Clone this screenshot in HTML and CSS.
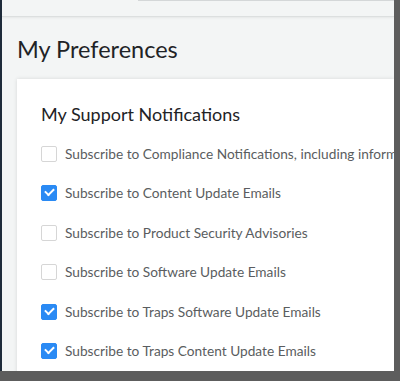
FILE: index.html
```html
<!DOCTYPE html>
<html lang="en">
<head>
  <meta charset="UTF-8" />
  <title>My Preferences</title>
  <meta name="viewport" content="width=device-width, initial-scale=1.0" />
  <link rel="stylesheet" href="styles.css">
</head>
<body>

<div class="screen">
  <header class="topbar">
    <div class="search"></div>
  </header>

  <h1>My Preferences</h1>

  <div class="card">
    <h2>My Support Notifications</h2>
    <div class="checklist">
      <label><input type="checkbox" /><span class="box"></span> Subscribe to Compliance Notifications, including information about product certifications</label>
      <label><input type="checkbox" checked /><span class="box"></span> Subscribe to Content Update Emails</label>
      <label><input type="checkbox" /><span class="box"></span> Subscribe to Product Security Advisories</label>
      <label><input type="checkbox" /><span class="box"></span> Subscribe to Software Update Emails</label>
      <label><input type="checkbox" checked /><span class="box"></span> Subscribe to Traps Software Update Emails</label>
      <label><input type="checkbox" checked /><span class="box"></span> Subscribe to Traps Content Update Emails</label>
    </div>
  </div>
</div>

</body>
</html>
```

FILE: styles.css
```css
:root {
  --page-bg: #f3f5f5;
  --frame: #5d5d5d;
  --text: #1f2326;
  --muted: #5a5d60;
  --blue: #2a8af4;
}

body {
  margin: 0;
  background-color: var(--frame);
  font-family: 'Lato', sans-serif;
}

.screen {
  width: 392px;
  height: 371px;
  background-color: var(--page-bg);
  border-left: 2px solid #1e2b3a;
  overflow: hidden;
}

.topbar {
  height: 16px;
  border-bottom: 1px solid #dcdfdf;
  box-shadow: 0 1px 2px rgba(0, 0, 0, 0.06);
}

.search {
  margin-left: 136px;
  height: 1px;
  background-color: #d4d7d8;
}

h1 {
  margin: 17px 0 0 15px;
  font-size: 23.5px;
  font-weight: normal;
  color: var(--text);
  line-height: 30px;
}

.card {
  margin: 15px 0 0 15px;
  background-color: #fff;
  box-shadow: 0 0 4px rgba(0, 0, 0, 0.12);
  padding: 24px 0 0 24px;
  height: 400px;
  white-space: nowrap;
}

.card h2 {
  margin: 0 0 21px 0;
  font-size: 18px;
  font-weight: normal;
  color: var(--text);
  line-height: 22px;
}

.checklist {
  display: flex;
  flex-direction: column;
  gap: 23.4px;
}

.checklist label {
  display: flex;
  align-items: center;
  font-size: 13.7px;
  color: var(--muted);
  line-height: 16px;
}

.checklist input[type="checkbox"] {
  display: none;
}

.box {
  flex: none;
  width: 14px;
  height: 14px;
  border: 1px solid #d6d6d6;
  border-radius: 2px;
  margin-right: 8px;
  position: relative;
  background-color: #fff;
}

.checklist input[type="checkbox"]:checked + .box {
  background-color: var(--blue);
  border-color: var(--blue);
}

.checklist input[type="checkbox"]:checked + .box::after {
  content: "";
  position: absolute;
  left: 3px;
  top: 2px;
  width: 7px;
  height: 4px;
  border-left: 2px solid #fff;
  border-bottom: 2px solid #fff;
  transform: rotate(-45deg);
}
```
